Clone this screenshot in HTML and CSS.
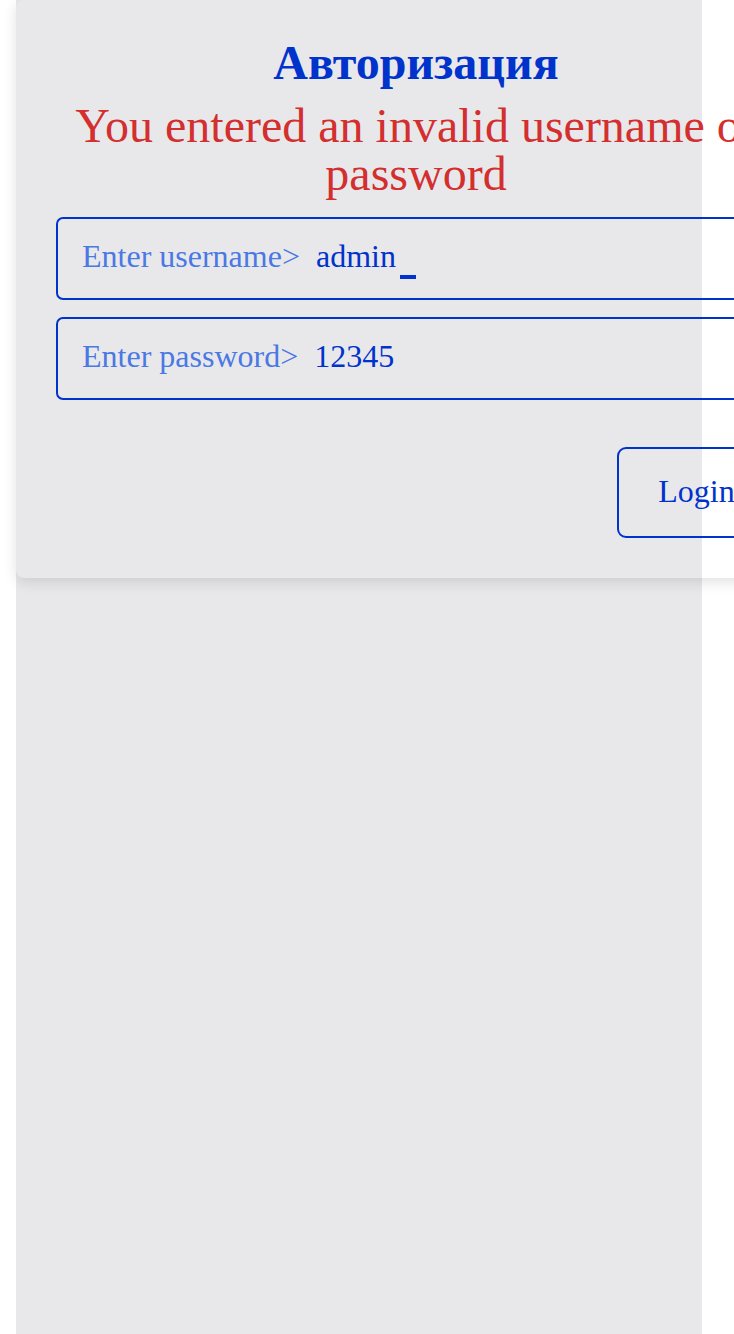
FILE: index.html
```html
<!DOCTYPE html>
<html lang="ru">
<head>
<meta charset="utf-8">
<title>Авторизация</title>
<link rel="stylesheet" href="styles.css">
</head>
<body>
<div class="page">
  <form class="card">
    <h1 class="title">Авторизация</h1>
    <p class="error">You entered an invalid username or password</p>
    <div class="field">
      <span class="label">Enter username&gt;</span>
      <span class="value">admin</span><span class="cursor"></span>
    </div>
    <div class="field">
      <span class="label">Enter password&gt;</span>
      <span class="value">12345</span>
    </div>
    <div class="actions">
      <button type="button" class="btn">Login</button>
    </div>
  </form>
</div>
</body>
</html>
```
FILE: styles.css
```css
html, body {
  margin: 0;
  padding: 0;
  background: #ffffff;
}
body {
  font-family: "Liberation Serif", "Times New Roman", serif;
}
.page {
  margin-left: 16px;
  width: 686px;
  min-height: 1334px;
  background: #e8e8ea;
}
.card {
  width: 800px;
  box-sizing: border-box;
  padding: 36px 40px 40px;
  border-radius: 8px;
  box-shadow: 0 4px 14px rgba(0, 0, 0, 0.12);
  display: flex;
  flex-direction: column;
}
.title {
  margin: 0;
  text-align: center;
  font-size: 48px;
  line-height: 53px;
  font-weight: bold;
  color: #0033cc;
}
.error {
  margin: 13px 0 2px;
  text-align: center;
  font-size: 48px;
  line-height: 48px;
  color: #d32f2f;
}
.field {
  margin-top: 17px;
  height: 83px;
  box-sizing: border-box;
  border: 2px solid #0033cc;
  border-radius: 7px;
  padding: 0 24px 5px;
  display: flex;
  align-items: center;
  font-size: 32px;
}
.label {
  color: #4a78e4;
  margin-right: 16px;
}
.value {
  color: #0033cc;
}
.cursor {
  display: inline-block;
  width: 16px;
  height: 4px;
  margin-left: 4px;
  margin-top: 42px;
  background: #0033cc;
}
.actions {
  margin-top: 47px;
  display: flex;
  justify-content: flex-end;
}
.btn {
  height: 91px;
  width: 159px;
  box-sizing: border-box;
  border: 2px solid #0033cc;
  border-radius: 9px;
  background: transparent;
  color: #0033cc;
  font-family: "Liberation Serif", "Times New Roman", serif;
  font-size: 32px;
  padding: 0 0 2px;
  cursor: pointer;
}
```
